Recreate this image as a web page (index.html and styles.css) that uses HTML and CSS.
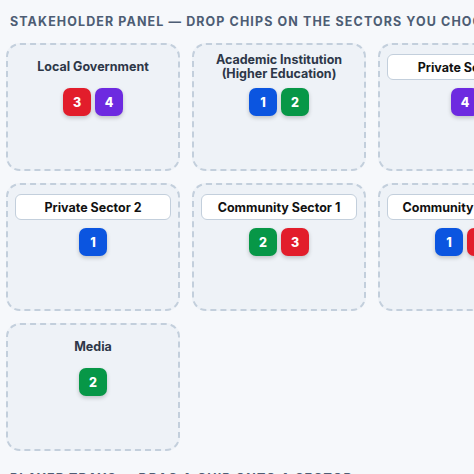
FILE: index.html
```html
<!DOCTYPE html>
<html lang="en">
<head>
    <meta charset="UTF-8">
    <meta name="viewport" content="width=device-width, initial-scale=1.0">
    <title>Stakeholder Panel</title>
    <link rel="stylesheet" href="styles.css">
</head>
<body>

    <section class="panel">
        <h2 class="panel-title">Stakeholder Panel — drop chips on the sectors you choose</h2>

        <div class="sectors">
            <div class="sector">
                <div class="sector-label">Local Government</div>
                <div class="chips">
                    <span class="chip red">3</span>
                    <span class="chip purple">4</span>
                </div>
            </div>
            <div class="sector">
                <div class="sector-label">Academic Institution (Higher Education)</div>
                <div class="chips">
                    <span class="chip blue">1</span>
                    <span class="chip green">2</span>
                </div>
            </div>
            <div class="sector">
                <input class="sector-input" type="text" value="Private Sector 1">
                <div class="chips">
                    <span class="chip purple">4</span>
                </div>
            </div>

            <div class="sector">
                <input class="sector-input" type="text" value="Private Sector 2">
                <div class="chips">
                    <span class="chip blue">1</span>
                </div>
            </div>
            <div class="sector">
                <input class="sector-input" type="text" value="Community Sector 1">
                <div class="chips">
                    <span class="chip green">2</span>
                    <span class="chip red">3</span>
                </div>
            </div>
            <div class="sector">
                <input class="sector-input" type="text" value="Community Sector 2">
                <div class="chips">
                    <span class="chip blue">1</span>
                    <span class="chip red">3</span>
                </div>
            </div>

            <div class="sector">
                <div class="sector-label">Media</div>
                <div class="chips">
                    <span class="chip green">2</span>
                </div>
            </div>
        </div>
    </section>

    <section class="panel">
        <h2 class="panel-title">Player trays — drag a chip onto a sector</h2>
    </section>

</body>
</html>
```

FILE: styles.css
```css
html, body {
    overflow: hidden;
}

body {
    font-family: Inter, "Liberation Sans", Arial, sans-serif;
    background-color: #f6f8fb;
    margin: 0;
    padding: 0 6px;
}

.panel {
    margin-bottom: 6px;
}

.panel-title {
    margin: 0;
    padding: 14px 4px 13px;
    font-size: 12.5px;
    line-height: 16px;
    font-weight: 700;
    letter-spacing: 1.1px;
    text-transform: uppercase;
    color: #4d5d74;
    white-space: nowrap;
}

.sectors {
    display: grid;
    grid-template-columns: repeat(3, 174px);
    grid-auto-rows: 128px;
    gap: 12px;
}

.sector {
    box-sizing: border-box;
    background-color: #eef2f7;
    border: 2px dashed #c3cfdc;
    border-radius: 14px;
    padding: 9px 7px;
    display: flex;
    flex-direction: column;
    align-items: center;
}

.sector-label {
    height: 26px;
    display: flex;
    align-items: center;
    justify-content: center;
    text-align: center;
    font-size: 12.5px;
    line-height: 14px;
    font-weight: 700;
    color: #2d3748;
}

.sector-input {
    box-sizing: border-box;
    width: 100%;
    height: 26px;
    margin: 0;
    padding: 0 6px;
    border: 1px solid #c3cfdc;
    border-radius: 6px;
    background-color: #fff;
    font-family: inherit;
    font-size: 12.5px;
    font-weight: 700;
    color: #111;
    text-align: center;
}

.chips {
    display: flex;
    gap: 4px;
    margin-top: 8px;
}

.chip {
    width: 28px;
    height: 28px;
    border-radius: 7px;
    display: flex;
    align-items: center;
    justify-content: center;
    color: #fff;
    font-size: 12.5px;
    font-weight: 800;
    box-shadow: 0 2px 4px rgba(0, 0, 0, 0.2);
}

.red { background-color: #e21d2b; }
.purple { background-color: #6d2ae0; }
.blue { background-color: #0b55e0; }
.green { background-color: #079747; }
```
